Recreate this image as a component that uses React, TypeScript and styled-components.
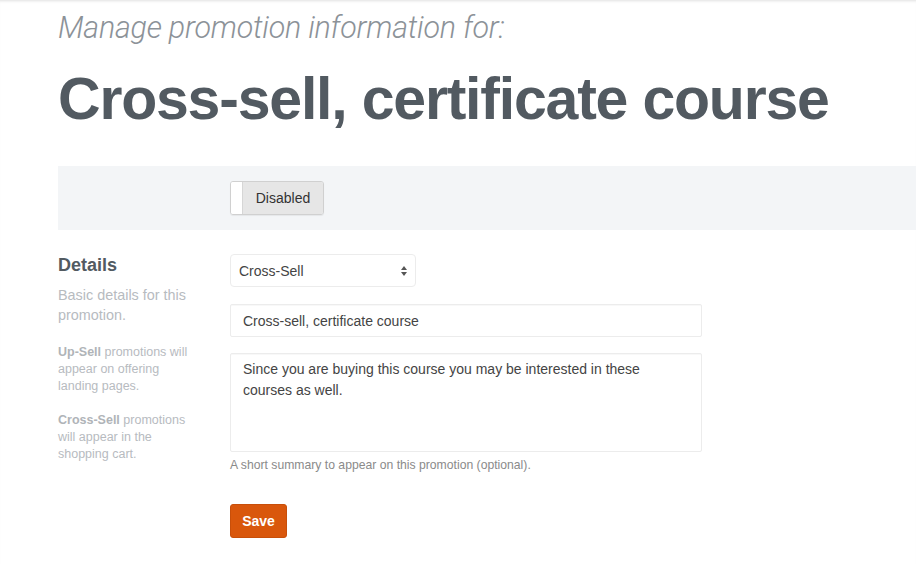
import React from "react";
import styled, { createGlobalStyle } from "styled-components";

const Global = createGlobalStyle`
  html, body { margin: 0; padding: 0; background: #fff; }
  body { font-family: "Liberation Sans", Arial, sans-serif; overflow: hidden; }
  * { box-sizing: border-box; }
`;

const Page = styled.div`
  width: 916px;
  height: 564px;
  overflow: hidden;
  position: relative;
  box-shadow: inset 0 3px 3px -2px rgba(0, 0, 0, 0.12);
  padding-left: 58px;
`;

const Subtitle = styled.h2`
  margin: 0;
  padding-top: 10px;
  font-family: "Roboto", "Liberation Sans", sans-serif;
  font-weight: 300;
  font-style: italic;
  font-size: 30.4px;
  line-height: 36px;
  color: #8c9298;
  letter-spacing: -0.2px;
`;

const Title = styled.h1`
  margin: 0;
  margin-top: 17px;
  font-family: "Liberation Sans", Arial, sans-serif;
  font-weight: 700;
  font-size: 59px;
  line-height: 72px;
  color: #525a61;
  letter-spacing: -1.2px;
`;

const Band = styled.div`
  margin-top: 31px;
  height: 64px;
  background: #f3f5f7;
  display: grid;
  grid-template-columns: 172px 1fr;
  align-items: center;
`;

const Toggle = styled.div`
  grid-column: 2;
  display: flex;
  width: 94px;
  height: 34px;
  border: 1px solid #d0d0d0;
  border-radius: 3px;
  overflow: hidden;
  box-shadow: 0 1px 1px rgba(0, 0, 0, 0.06);
`;

const Knob = styled.span`
  width: 12px;
  background: #fff;
  border-right: 1px solid #d6d6d6;
`;

const ToggleLabel = styled.span`
  flex: 1;
  display: flex;
  align-items: center;
  justify-content: center;
  background: #e6e6e6;
  font-size: 14px;
  color: #333;
`;

const Section = styled.div`
  display: grid;
  grid-template-columns: 172px 472px;
  padding-top: 24px;
`;

const Aside = styled.div`
  display: flex;
  flex-direction: column;
`;

const AsideTitle = styled.h3`
  margin: 0;
  font-size: 18px;
  line-height: 22px;
  font-weight: 700;
  color: #525a61;
`;

const AsideLead = styled.p`
  margin: 9px 0 0;
  font-size: 14.4px;
  line-height: 20px;
  color: #b7bbbf;
  width: 140px;
`;

const AsideNote = styled.p<{ $gap: number }>`
  margin: ${(p) => p.$gap}px 0 0;
  font-size: 12.5px;
  line-height: 17px;
  color: #b7bbbf;
  width: 134px;
`;

const Strong = styled.strong`
  font-weight: 700;
  color: #b0b4b8;
`;

const Form = styled.div`
  display: flex;
  flex-direction: column;
`;

const SelectBox = styled.div`
  width: 186px;
  height: 33px;
  border: 1px solid #ececec;
  border-radius: 4px;
  display: flex;
  align-items: center;
  justify-content: space-between;
  padding: 0 6px 0 8px;
  font-size: 14px;
  color: #444;
`;

const TextInput = styled.div`
  margin-top: 17px;
  height: 33px;
  border: 1px solid #ececec;
  border-radius: 2px;
  box-shadow: inset 0 1px 1px rgba(0, 0, 0, 0.03);
  display: flex;
  align-items: center;
  padding: 0 12px;
  font-size: 14px;
  color: #444;
`;

const TextArea = styled.div`
  margin-top: 16px;
  height: 99px;
  border: 1px solid #ececec;
  border-radius: 2px;
  box-shadow: inset 0 1px 1px rgba(0, 0, 0, 0.03);
  padding: 5px 12px;
  font-size: 14px;
  line-height: 21px;
  color: #444;
`;

const Help = styled.p`
  margin: 5px 0 0;
  font-size: 12.2px;
  line-height: 16px;
  color: #8a8a8a;
`;

const Save = styled.button`
  margin-top: 31px;
  align-self: flex-start;
  width: 57px;
  height: 34px;
  background: #d9570c;
  border: 1px solid #c84f0a;
  border-radius: 3px;
  color: #fff;
  font-family: "Liberation Sans", Arial, sans-serif;
  font-weight: 700;
  font-size: 14px;
  padding: 0;
`;

const Arrows = () => (
  <svg width="10" height="14" viewBox="0 0 10 14">
    <path d="M5 2 L8 6 L2 6 Z" fill="#555" />
    <path d="M5 12 L8 8 L2 8 Z" fill="#555" />
  </svg>
);

export default function App() {
  return (
    <Page>
      <Global />
      <Subtitle>Manage promotion information for:</Subtitle>
      <Title>Cross-sell, certificate course</Title>
      <Band>
        <Toggle>
          <Knob />
          <ToggleLabel>Disabled</ToggleLabel>
        </Toggle>
      </Band>
      <Section>
        <Aside>
          <AsideTitle>Details</AsideTitle>
          <AsideLead>Basic details for this promotion.</AsideLead>
          <AsideNote $gap={19}>
            <Strong>Up-Sell</Strong> promotions will appear on offering landing pages.
          </AsideNote>
          <AsideNote $gap={17}>
            <Strong>Cross-Sell</Strong> promotions will appear in the shopping cart.
          </AsideNote>
        </Aside>
        <Form>
          <SelectBox>
            <span>Cross-Sell</span>
            <Arrows />
          </SelectBox>
          <TextInput>Cross-sell, certificate course</TextInput>
          <TextArea>
            Since you are buying this course you may be interested in these courses as well.
          </TextArea>
          <Help>A short summary to appear on this promotion (optional).</Help>
          <Save>Save</Save>
        </Form>
      </Section>
    </Page>
  );
}
